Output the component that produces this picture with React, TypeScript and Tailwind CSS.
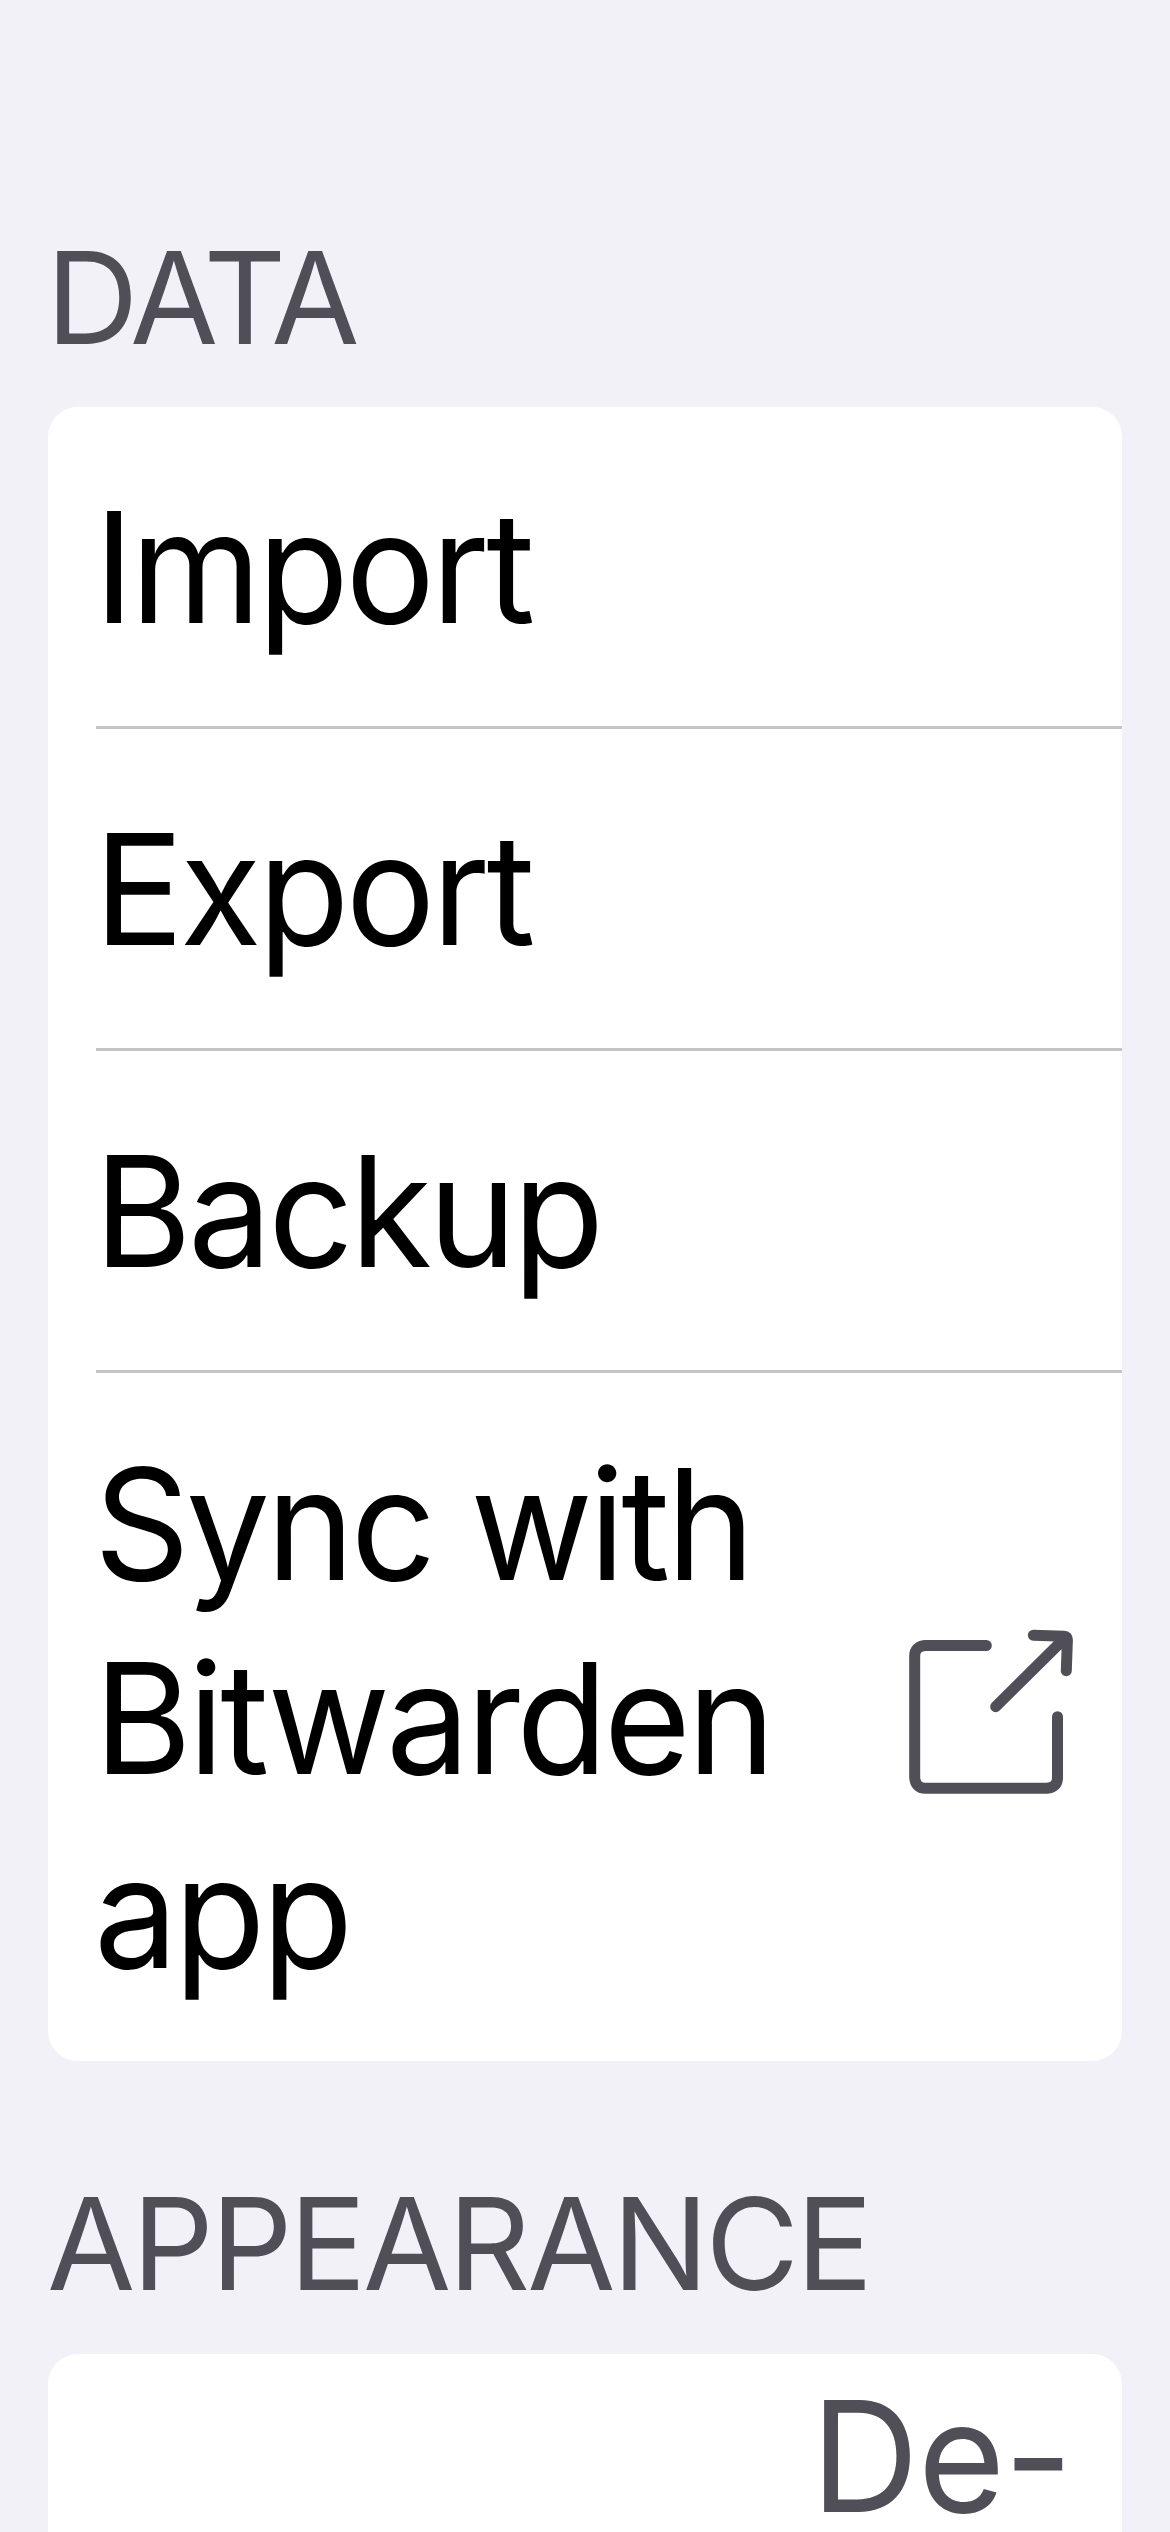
const rows = ["Import", "Export", "Backup"];

export default function App() {
  return (
    <div className="flex h-[2532px] w-[1170px] flex-col overflow-hidden bg-[#f2f1f7] px-12 font-['Inter',sans-serif] text-black">
      <h2 className="mt-[227px] -ml-0.5 h-[180px] shrink-0 text-[128px] leading-[142px] tracking-[-4px] text-[#504f58]">DATA</h2>
      <section className="h-[1654px] shrink-0 rounded-[30px] bg-white pl-12">
        {rows.map((r) => (
          <div key={r} className="flex h-[322px] items-center border-b-3 border-[#c5c5c7] text-[154px] leading-[194px] tracking-[-3.8px]">
            <span className="-ml-0.5 origin-left scale-x-97">{r}</span>
          </div>
        ))}
        <div className="flex h-[688px] items-center justify-between pr-12 text-[154px] leading-[194px] tracking-[-3.9px]">
          <div className="-ml-0.5 origin-left scale-x-97 pt-0.5">Sync with<br />Bitwarden<br />app</div>
          <svg className="shrink-0 overflow-visible" width="168" height="168" viewBox="0 0 168 168" fill="none" stroke="#504f58" strokeWidth="11" strokeLinecap="round" strokeLinejoin="round">
            <path d="M80.3 12.5H19.2Q8.7 13.5 8.7 23V144.8Q9.7 155.3 19.2 155.3H141Q151.5 154.3 151.5 144.8V83.7" />
            <path d="M89.7 73.7L160 4M127.3 2.3L158 3.2Q161.5 3.3 161.4 7L160.3 37.7" />
          </svg>
        </div>
      </section>
      <h2 className="mt-[112px] -ml-px h-[181px] shrink-0 text-[128px] leading-[142px] tracking-[-3.2px] text-[#504f58]">APPEARANCE</h2>
      <section className="flex h-[178px] shrink-0 items-start justify-end rounded-t-[30px] bg-white pt-[38px] pr-[50px] text-[154px] leading-[128px] tracking-[-1px] text-[#504f58]">
        <span className="h-[128px] origin-right scale-x-97">De-</span>
      </section>
    </div>
  );
}
